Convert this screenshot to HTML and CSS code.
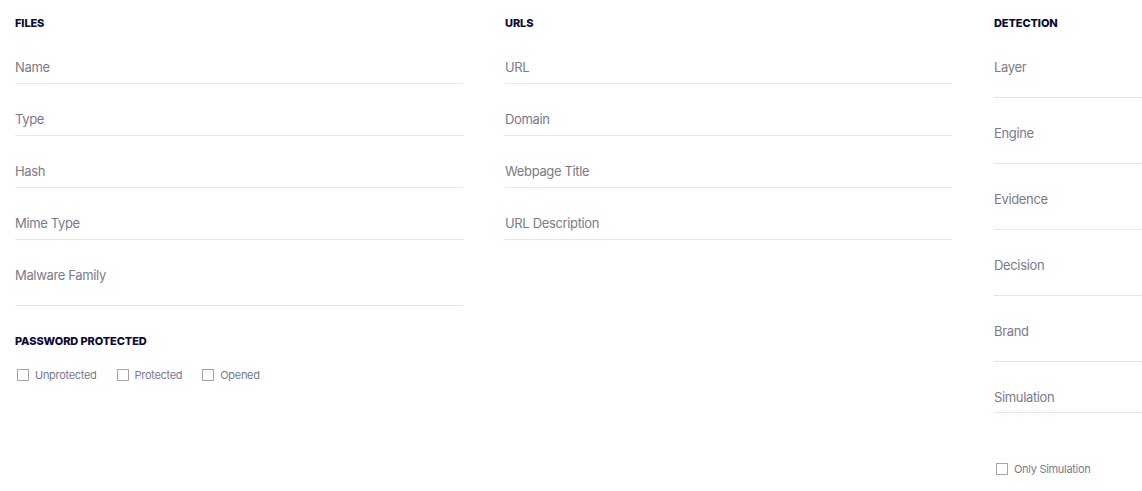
FILE: index.html
```html
<!DOCTYPE html>
<html>
<head>
<meta charset="utf-8">
<link rel="stylesheet" href="styles.css">
</head>
<body>
<div class="filters">
  <section class="col">
    <h3 class="heading">FILES</h3>
    <div class="field"><span>Name</span></div>
    <div class="field"><span>Type</span></div>
    <div class="field"><span>Hash</span></div>
    <div class="field"><span>Mime Type</span></div>
    <div class="field tall"><span>Malware Family</span></div>
    <h3 class="heading sub">PASSWORD PROTECTED</h3>
    <div class="checks">
      <label class="check"><span class="box"></span>Unprotected</label>
      <label class="check"><span class="box"></span>Protected</label>
      <label class="check"><span class="box"></span>Opened</label>
    </div>
  </section>
  <section class="col">
    <h3 class="heading">URLS</h3>
    <div class="field"><span>URL</span></div>
    <div class="field"><span>Domain</span></div>
    <div class="field"><span>Webpage Title</span></div>
    <div class="field"><span>URL Description</span></div>
  </section>
  <section class="col">
    <h3 class="heading">DETECTION</h3>
    <div class="field tall"><span>Layer</span></div>
    <div class="field tall"><span>Engine</span></div>
    <div class="field tall"><span>Evidence</span></div>
    <div class="field tall"><span>Decision</span></div>
    <div class="field tall"><span>Brand</span></div>
    <div class="field short"><span>Simulation</span></div>
    <div class="checks only">
      <label class="check"><span class="box"></span>Only Simulation</label>
    </div>
  </section>
</div>
</body>
</html>
```
FILE: styles.css
```css
html, body {
  margin: 0;
  padding: 0;
  background: #ffffff;
  overflow: hidden;
}
body {
  font-family: Inter, "Noto Sans", "Liberation Sans", sans-serif;
  width: 1142px;
  height: 491px;
}
.filters {
  display: grid;
  grid-template-columns: 448px 447px 448px;
  column-gap: 42px;
  padding-left: 15px;
  align-items: start;
}
.col {
  display: flex;
  flex-direction: column;
}
.heading {
  margin: 16px 0 2px 0;
  height: 14px;
  line-height: 14px;
  font-size: 11px;
  font-weight: 800;
  letter-spacing: -0.1px;
  color: #0c0b33;
}
.heading.sub {
  margin-top: 28px;
}
.field {
  padding: 25px 0 6px 0;
  height: 20px;
  line-height: 20px;
  font-size: 13px;
  letter-spacing: -0.35px;
  color: #7a7a8c;
  border-bottom: 1px solid #e6e6e8;
}
.field.tall {
  padding-bottom: 20px;
}
.field.short {
  padding-bottom: 5px;
}
.checks {
  display: flex;
  gap: 18px;
  margin-top: 17px;
}
.checks.only {
  margin-top: 48px;
}
.check {
  display: flex;
  align-items: center;
  gap: 6px;
  height: 16px;
  font-size: 11px;
  letter-spacing: -0.3px;
  color: #7a7a8c;
}
.box {
  width: 10px;
  height: 10px;
  border: 1.5px solid #a4a4ae;
  margin-left: 2px;
}
```
